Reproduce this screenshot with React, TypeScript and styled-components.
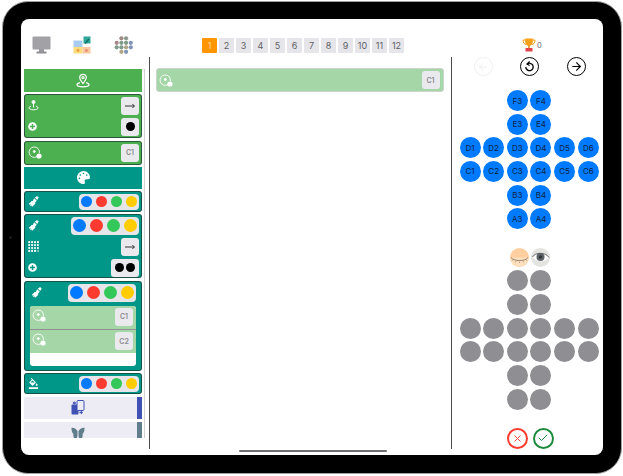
import * as React from "react"
import styled, { createGlobalStyle } from "styled-components"
import { ArrowLeft, ArrowRight, X, Check } from "lucide-react"
import { FaPalette, FaPlusCircle } from "react-icons/fa"
import { MdFormatColorFill } from "react-icons/md"

const COLORS = ["#007AFF", "#FF3B30", "#34C759", "#FFCC00"]
const TABS = [1, 2, 3, 4, 5, 6, 7, 8, 9, 10, 11, 12]
const BOARD = [
  [null, null, "F3", "F4", null, null],
  [null, null, "E3", "E4", null, null],
  ["D1", "D2", "D3", "D4", "D5", "D6"],
  ["C1", "C2", "C3", "C4", "C5", "C6"],
  [null, null, "B3", "B4", null, null],
  [null, null, "A3", "A4", null, null],
]

const GlobalStyle = createGlobalStyle`
  html, body {
    margin: 0;
    background: #fff;
    overflow: hidden;
  }
  * {
    box-sizing: border-box;
  }
`

const Page = styled.div`
  width: 623px;
  height: 476px;
  padding: 1px 1px 2px 2px;
  font-family: Inter, "Liberation Sans", sans-serif;
`

const Device = styled.div`
  position: relative;
  width: 620px;
  height: 473px;
  padding: 17px 18px 18px 18px;
  background: #000;
  border: 1px solid #a0a0a0;
  border-radius: 26px;
`

const Camera = styled.div`
  position: absolute;
  left: 6px;
  top: 234px;
  width: 3px;
  height: 3px;
  border-radius: 50%;
  background: #1c1c1f;
`

const Screen = styled.div`
  position: relative;
  width: 582px;
  height: 436px;
  background: #fff;
  border-radius: 8px;
  overflow: hidden;
  display: flex;
  flex-direction: column;
`

const Header = styled.header`
  height: 38px;
  flex: none;
  display: flex;
  align-items: flex-start;
`

const AppIcons = styled.div`
  width: 181px;
  padding: 17px 0 0 11px;
  display: flex;
  gap: 22px;
`

const Tabs = styled.div`
  padding-top: 19px;
  display: flex;
  gap: 2px;
`

const Tab = styled.div<{ $active?: boolean }>`
  width: 15px;
  height: 15px;
  display: flex;
  align-items: center;
  justify-content: center;
  font-size: 9px;
  border-radius: 1px;
  color: ${(p) => (p.$active ? "#ffd9a0" : "#5f5f65")};
  background: ${(p) => (p.$active ? "#FF9500" : "#E5E5EA")};
`

const Score = styled.div`
  margin-left: 118px;
  padding-top: 19px;
  display: flex;
  align-items: center;
  gap: 1px;
  font-size: 7.5px;
  color: #66666c;
`

const Body = styled.div`
  height: 392px;
  flex: none;
  display: flex;
`

const LeftColumn = styled.div`
  width: 128.5px;
  flex: none;
  padding: 12px 0 11px 3px;
  border-right: 1.5px solid #4a4a4c;
`

const List = styled.div`
  width: 121px;
  height: 369px;
  padding-right: 2px;
  border-right: 1px solid #d0d0d0;
  overflow: hidden;
  display: flex;
  flex-direction: column;
  gap: 2px;
`

const Bar = styled.div<{ $bg: string }>`
  height: 22.5px;
  flex: none;
  display: flex;
  align-items: center;
  justify-content: center;
  color: #fff;
  background: ${(p) => p.$bg};
`

const Panel = styled.div<{ $bg: string; $height: number; $top?: number }>`
  height: ${(p) => p.$height}px;
  flex: none;
  margin-top: ${(p) => p.$top ?? 0}px;
  padding: 2px 2px 2px 3px;
  display: flex;
  flex-direction: column;
  gap: 3px;
  color: #fff;
  background: ${(p) => p.$bg};
  border: 1px solid rgba(30, 60, 50, 0.75);
  border-radius: 3px;
`

const Row = styled.div<{ $inset?: number }>`
  display: flex;
  align-items: center;
  justify-content: space-between;
  padding-right: ${(p) => p.$inset ?? 0}px;
  padding-left: ${(p) => p.$inset ?? 0}px;
`

const Chip = styled.div<{ $width?: number }>`
  width: ${(p) => p.$width ?? 18}px;
  height: 18px;
  flex: none;
  display: flex;
  align-items: center;
  justify-content: center;
  gap: 2px;
  background: #E9E9EE;
  border-radius: 3px;
  color: #8a8a8e;
  font-size: 7px;
  font-weight: 600;
`

const Swatches = styled.div<{ $size: number; $step: number }>`
  height: ${(p) => p.$size + 4.5}px;
  padding: 0 2px;
  display: flex;
  align-items: center;
  gap: ${(p) => p.$step - p.$size}px;
  background: #E5E5EA;
  border-radius: 4px;
`

const Swatch = styled.span<{ $color: string; $size: number }>`
  width: ${(p) => p.$size}px;
  height: ${(p) => p.$size}px;
  border-radius: 50%;
  background: ${(p) => p.$color};
`

const BlackDot = styled.span<{ $size: number }>`
  width: ${(p) => p.$size}px;
  height: ${(p) => p.$size}px;
  border-radius: 50%;
  background: #000;
`

const SlotList = styled.div`
  height: 60px;
  margin: 1px 3px 0 2px;
  background: #fff;
  border-radius: 3px;
  overflow: hidden;
`

const Slot = styled.div`
  height: 23.5px;
  padding: 2px 3px 0 2px;
  display: flex;
  align-items: flex-start;
  justify-content: space-between;
  background: #A5D6A7;
  color: #fff;
  & + & {
    border-top: 1px solid #8e8e93;
  }
`

const ToolBar = styled.div<{ $accent: string; $height: number; $pad: number }>`
  height: ${(p) => p.$height}px;
  flex: none;
  margin-top: 1px;
  display: flex;
  align-items: flex-start;
  justify-content: center;
  padding: ${(p) => p.$pad}px 5px 0 0;
  overflow: hidden;
  background: #EDECF4;
  border-right: 5px solid ${(p) => p.$accent};
`

const Middle = styled.div`
  width: 302px;
  flex: none;
  padding: 11px 7px 0 6px;
  border-right: 1.5px solid #4a4a4c;
`

const Selected = styled.div`
  height: 24px;
  padding: 0 3px 0 2px;
  display: flex;
  align-items: center;
  justify-content: space-between;
  color: #fff;
  background: #A5D6A7;
  border: 1px solid #cfd4cf;
  border-radius: 3px;
`

const Right = styled.div`
  flex: 1;
  display: flex;
  flex-direction: column;
  padding-left: 8px;
`

const Nav = styled.div`
  display: flex;
  gap: 27.5px;
  padding-left: 14px;
`

const NavButton = styled.button<{ $disabled?: boolean }>`
  width: 19px;
  height: 19px;
  padding: 0;
  display: flex;
  align-items: center;
  justify-content: center;
  background: none;
  border-radius: 50%;
  border: 1.5px solid ${(p) => (p.$disabled ? "#f0f0f0" : "#000")};
  color: ${(p) => (p.$disabled ? "#eeeeee" : "#000")};
`

const Board = styled.div<{ $top: number }>`
  margin-top: ${(p) => p.$top}px;
  display: grid;
  grid-template-columns: repeat(6, 21px);
  grid-auto-rows: 21px;
  gap: 2.66px;
`

const Cell = styled.div<{ $color: string }>`
  display: flex;
  align-items: center;
  justify-content: center;
  border-radius: 50%;
  font-size: 8px;
  color: #10243d;
  background: ${(p) => p.$color};
`

const Eyes = styled.div`
  margin: 19px 0 3px 50.5px;
  display: flex;
  gap: 2px;
`

const Actions = styled.div`
  margin: 18px 0 0 47px;
  display: flex;
  gap: 5px;
`

const ActionButton = styled.button<{ $color: string }>`
  width: 21px;
  height: 21px;
  padding: 0;
  display: flex;
  align-items: center;
  justify-content: center;
  background: #fff;
  border-radius: 50%;
  border: 2px solid ${(p) => p.$color};
  color: ${(p) => p.$color};
`

const HomeIndicator = styled.div`
  position: absolute;
  left: 218px;
  bottom: 3px;
  width: 148px;
  height: 2px;
  border-radius: 1px;
  background: #6e6e73;
`

const MonitorIcon = () => (
  <svg width="19" height="18" viewBox="0 0 19 18">
    <rect x="0.5" y="0.5" width="18" height="13" rx="1" fill="#a2a2a6" />
    <rect x="7" y="13" width="5" height="3" fill="#9a9a9e" />
    <rect x="4.5" y="15.5" width="10" height="2" rx="0.5" fill="#8e8e93" />
  </svg>
)

const PuzzleIcon = () => (
  <svg width="19" height="18" viewBox="0 0 19 18">
    <rect x="0.5" y="4.500" width="9" height="6.500" fill="#a9cdf0" />
    <rect x="10.500" y="0.500" width="7" height="7" fill="#2fa79a" />
    <path d="M12 7.500 L16 3" stroke="#0f6f66" strokeWidth="1.500" />
    <rect x="0.5" y="11" width="9" height="6.500" fill="#fbdc7c" />
    <rect x="9.500" y="11" width="8" height="6.500" fill="#f8c9a0" />
    <circle cx="5" cy="14.500" r="1.400" fill="#e8a13a" />
    <circle cx="13.500" cy="14.500" r="1.400" fill="#e98f73" />
  </svg>
)

const DotsIcon = () => {
  const cells: [number, number, string][] = [
    [1, 0, "#a08a86"], [2, 0, "#8a9a8e"],
    [0, 1, "#a88686"], [1, 1, "#7e9b8c"], [2, 1, "#7f9a84"], [3, 1, "#7f93b5"],
    [0, 2, "#7e9b8c"], [1, 2, "#7e9b8c"], [2, 2, "#b0a584"], [3, 2, "#7f93b5"],
    [1, 3, "#b0a584"], [2, 3, "#7f93b5"],
  ]
  return (
    <svg width="19" height="18" viewBox="0 0 19 18">
      {cells.map(([x, y, tint], i) => (
        <circle key={i} cx={2.700 + x * 4.700} cy={2.300 + y * 4.500} r="2.100" fill={tint} />
      ))}
    </svg>
  )
}

const TrophyIcon = () => (
  <svg width="14" height="14" viewBox="0 0 14 14">
    <path d="M3.500 2H1c0 3 1.500 4.500 3.500 4.500M10.500 2H13c0 3-1.500 4.500-3.500 4.500" fill="none" stroke="#f39c12" strokeWidth="1" />
    <path d="M3.200 0.500h7.600v3.500c0 2.300-1.700 3.700-3.800 3.700S3.200 6.300 3.200 4z" fill="#f7a118" />
    <rect x="6.200" y="7" width="1.600" height="3" fill="#e88a1a" />
    <rect x="3.500" y="10" width="7" height="3.500" fill="#e0454c" />
  </svg>
)

const PinIcon = () => (
  <svg width="14" height="15" viewBox="0 0 14 15" fill="none" stroke="#fff" strokeWidth="1.2">
    <path d="M7 10.500C5 8 3.700 6.500 3.700 4.600a3.300 3.300 0 0 1 6.600 0C10.300 6.500 9 8 7 10.500z" />
    <circle cx="7" cy="4.600" r="1.100" />
    <path d="M4 9.600C2 10 1 10.800 1 11.800c0 1.200 2.500 2 6 2s6-.8 6-2c0-1-1-1.800-3-2.200" />
  </svg>
)

const JoystickIcon = () => (
  <svg width="11" height="11" viewBox="0 0 11 11" fill="none" stroke="#fff" strokeWidth="1">
    <circle cx="5.500" cy="2" r="1.500" fill="#fff" />
    <path d="M5.500 3v4.500" />
    <path d="M3 6.200C1.500 6.600 1 7.200 1 8c0 1 2 1.800 4.500 1.800S10 9 10 8c0-.8-.5-1.400-2-1.800" />
  </svg>
)

const TargetIcon = () => (
  <svg width="15" height="15" viewBox="0 0 15 15" fill="none" stroke="#fff" strokeWidth="0.9">
    <path d="M9 11.600A5.200 5.200 0 1 1 11.400 8" />
    <circle cx="6.300" cy="6.500" r="1" fill="#fff" />
    <circle cx="11" cy="11" r="2.600" fill="#fff" stroke="none" />
  </svg>
)

const BrushIcon = () => (
  <svg width="11" height="11" viewBox="0 0 11 11" fill="#fff">
    <path d="M6.200 2.200l2.600 2.600-1.700 1.600.2 1.400-2.800 2.700-1-.2.800-1.300-1.400 1-1-.6 1.200-1.400-1.500.8L.9 7.700l2.800-2.700 1-.1z" />
    <path d="M6.900 1.800L8.700.3c.5-.4 1.100 0 1.400.4.400.4.700 1 .3 1.400L9.200 4z" />
  </svg>
)

const GridIcon = () => (
  <svg width="11" height="11" viewBox="0 0 11 11">
    {[0, 1, 2, 3].map((y) =>
      [0, 1, 2, 3].map((x) =>
        x === 3 && y === 3 ? (
          <circle key={x} cx={1.200 + x * 2.900} cy={1.200 + y * 2.900} r="0.900" fill="none" stroke="#fff" strokeWidth="0.500" />
        ) : (
          <circle key={x} cx={1.200 + x * 2.900} cy={1.200 + y * 2.900} r="1.100" fill="#fff" />
        ),
      ),
    )}
  </svg>
)

const LongArrow = () => (
  <svg width="10" height="6" viewBox="0 0 10 6" fill="none" stroke="#222" strokeWidth="0.900">
    <path d="M0 3h9.400M7.400 1l2 2-2 2" />
  </svg>
)

const ReloadIcon = () => (
  <svg width="11" height="11" viewBox="0 0 11 11" fill="none" stroke="#000" strokeWidth="1.300">
    <path d="M3 3.200A3.700 3.700 0 1 1 1.800 6" />
    <path d="M5.600 0.500L3 3.100l2.600 1.500" strokeWidth="1.100" />
  </svg>
)

const SwapIcon = () => (
  <svg width="14" height="15" viewBox="0 0 14 15">
    <rect x="0.500" y="4.500" width="7" height="10" rx="1" fill="#3F51B5" />
    <rect x="6" y="0.500" width="7" height="10" rx="1" fill="#EDECF4" stroke="#3F51B5" />
    <path d="M1.500 3l2-2v1.300h1.500v1.400H3.500V5z" fill="#3F51B5" />
    <path d="M12 12.500l-2 2v-1.300H8.500v-1.400H10V10.500z" fill="#3F51B5" />
  </svg>
)

const ButterflyIcon = () => (
  <svg width="14" height="13" viewBox="0 0 14 13" fill="#607D8B">
    <path d="M6.500 4C5 1.500 2.500 0.300 0.500 0.800 0.300 3 1 6 2.500 7 1.800 9 3 12 4.500 12.300 5.800 12.500 6.500 10 6.500 8z" />
    <path d="M7.500 4C9 1.500 11.500 0.300 13.500 0.800 13.700 3 13 6 11.500 7 12.200 9 11 12 9.500 12.300 8.200 12.500 7.500 10 7.500 8z" />
  </svg>
)

const ClosedEye = () => (
  <svg width="19" height="19" viewBox="0 0 19 19">
    <circle cx="9.500" cy="9.500" r="9.500" fill="#FFCFA0" />
    <path d="M0.500 9.500a9 9 0 0 0 18 0z" fill="#FFE0BE" />
    <path d="M1 9.500c2.500 4 14.500 4 17 0" fill="none" stroke="#7a6a5a" strokeWidth="0.800" />
    <path d="M3 11.500l-1 1.300M6 13l-.6 1.400M9.500 13.500v1.500M13 13l.6 1.400M16 11.500l1 1.300" stroke="#7a6a5a" strokeWidth="0.500" />
  </svg>
)

const OpenEye = () => (
  <svg width="19" height="19" viewBox="0 0 19 19">
    <circle cx="9.500" cy="9.500" r="9.500" fill="#E3E3E0" />
    <path d="M1.500 9c2.500-5 13.500-5 16.500 0.500-3 5-13.500 5-16.500-.5z" fill="#fff" />
    <circle cx="9.500" cy="9" r="4" fill="#5f6468" />
    <circle cx="9.500" cy="9" r="1.800" fill="#33373a" />
    <path d="M1.500 9c2.500-5 13.500-5 16.500 0.500" fill="none" stroke="#55595c" strokeWidth="0.900" />
  </svg>
)

const ColorSwatches = ({ size, step }: { size: number; step: number }) => (
  <Swatches $size={size} $step={step}>
    {COLORS.map((c) => (
      <Swatch key={c} $color={c} $size={size} />
    ))}
  </Swatches>
)

const GameBoard = ({ top, labelled }: { top: number; labelled?: boolean }) => (
  <Board $top={top}>
    {BOARD.flat().map((id, i) =>
      id ? (
        <Cell key={i} $color={labelled ? "#007AFF" : "#8E8E93"}>
          {labelled ? id : ""}
        </Cell>
      ) : (
        <div key={i} />
      ),
    )}
  </Board>
)

export default function App() {
  return (
    <Page>
      <GlobalStyle />
      <Device>
        <Camera />
        <Screen>
          <Header>
            <AppIcons>
              <MonitorIcon />
              <PuzzleIcon />
              <DotsIcon />
            </AppIcons>
            <Tabs>
              {TABS.map((t) => (
                <Tab key={t} $active={t === 1}>
                  {t}
                </Tab>
              ))}
            </Tabs>
            <Score>
              <TrophyIcon />0
            </Score>
          </Header>
          <Body>
            <LeftColumn>
              <List>
                <Bar $bg="#4CAF50">
                  <PinIcon />
                </Bar>
                <Panel $bg="#4CAF50" $height={44}>
                  <Row>
                    <JoystickIcon />
                    <Chip>
                      <LongArrow />
                    </Chip>
                  </Row>
                  <Row>
                    <FaPlusCircle size={9} />
                    <Chip>
                      <BlackDot $size={9} />
                    </Chip>
                  </Row>
                </Panel>
                <Panel $bg="#4CAF50" $height={24} $top={1}>
                  <Row>
                    <TargetIcon />
                    <Chip>C1</Chip>
                  </Row>
                </Panel>
                <Bar $bg="#009688">
                  <FaPalette size={13} />
                </Bar>
                <Panel $bg="#009688" $height={21}>
                  <Row>
                    <BrushIcon />
                    <ColorSwatches size={11} step={15} />
                  </Row>
                </Panel>
                <Panel $bg="#009688" $height={64}>
                  <Row>
                    <BrushIcon />
                    <ColorSwatches size={13} step={17} />
                  </Row>
                  <Row>
                    <GridIcon />
                    <Chip>
                      <LongArrow />
                    </Chip>
                  </Row>
                  <Row>
                    <FaPlusCircle size={9} />
                    <Chip $width={28}>
                      <BlackDot $size={9} />
                      <BlackDot $size={9} />
                    </Chip>
                  </Row>
                </Panel>
                <Panel $bg="#009688" $height={90} $top={1}>
                  <Row $inset={3}>
                    <BrushIcon />
                    <ColorSwatches size={13} step={17} />
                  </Row>
                  <SlotList>
                    <Slot>
                      <TargetIcon />
                      <Chip>C1</Chip>
                    </Slot>
                    <Slot>
                      <TargetIcon />
                      <Chip>C2</Chip>
                    </Slot>
                  </SlotList>
                </Panel>
                <Panel $bg="#009688" $height={21}>
                  <Row>
                    <MdFormatColorFill size={11} />
                    <ColorSwatches size={11} step={15} />
                  </Row>
                </Panel>
                <ToolBar $accent="#3F51B5" $height={22} $pad={3}>
                  <SwapIcon />
                </ToolBar>
                <ToolBar $accent="#607D8B" $height={22} $pad={5}>
                  <ButterflyIcon />
                </ToolBar>
              </List>
            </LeftColumn>
            <Middle>
              <Selected>
                <TargetIcon />
                <Chip>C1</Chip>
              </Selected>
            </Middle>
            <Right>
              <Nav>
                <NavButton $disabled>
                  <ArrowLeft size={12} />
                </NavButton>
                <NavButton>
                  <ReloadIcon />
                </NavButton>
                <NavButton>
                  <ArrowRight size={13} strokeWidth={2} />
                </NavButton>
              </Nav>
              <GameBoard top={14} labelled />
              <Eyes>
                <ClosedEye />
                <OpenEye />
              </Eyes>
              <GameBoard top={0} />
              <Actions>
                <ActionButton $color="#FF3B30">
                  <X size={11} />
                </ActionButton>
                <ActionButton $color="#1C8C3C">
                  <Check size={12} />
                </ActionButton>
              </Actions>
            </Right>
          </Body>
          <HomeIndicator />
        </Screen>
      </Device>
    </Page>
  )
}
